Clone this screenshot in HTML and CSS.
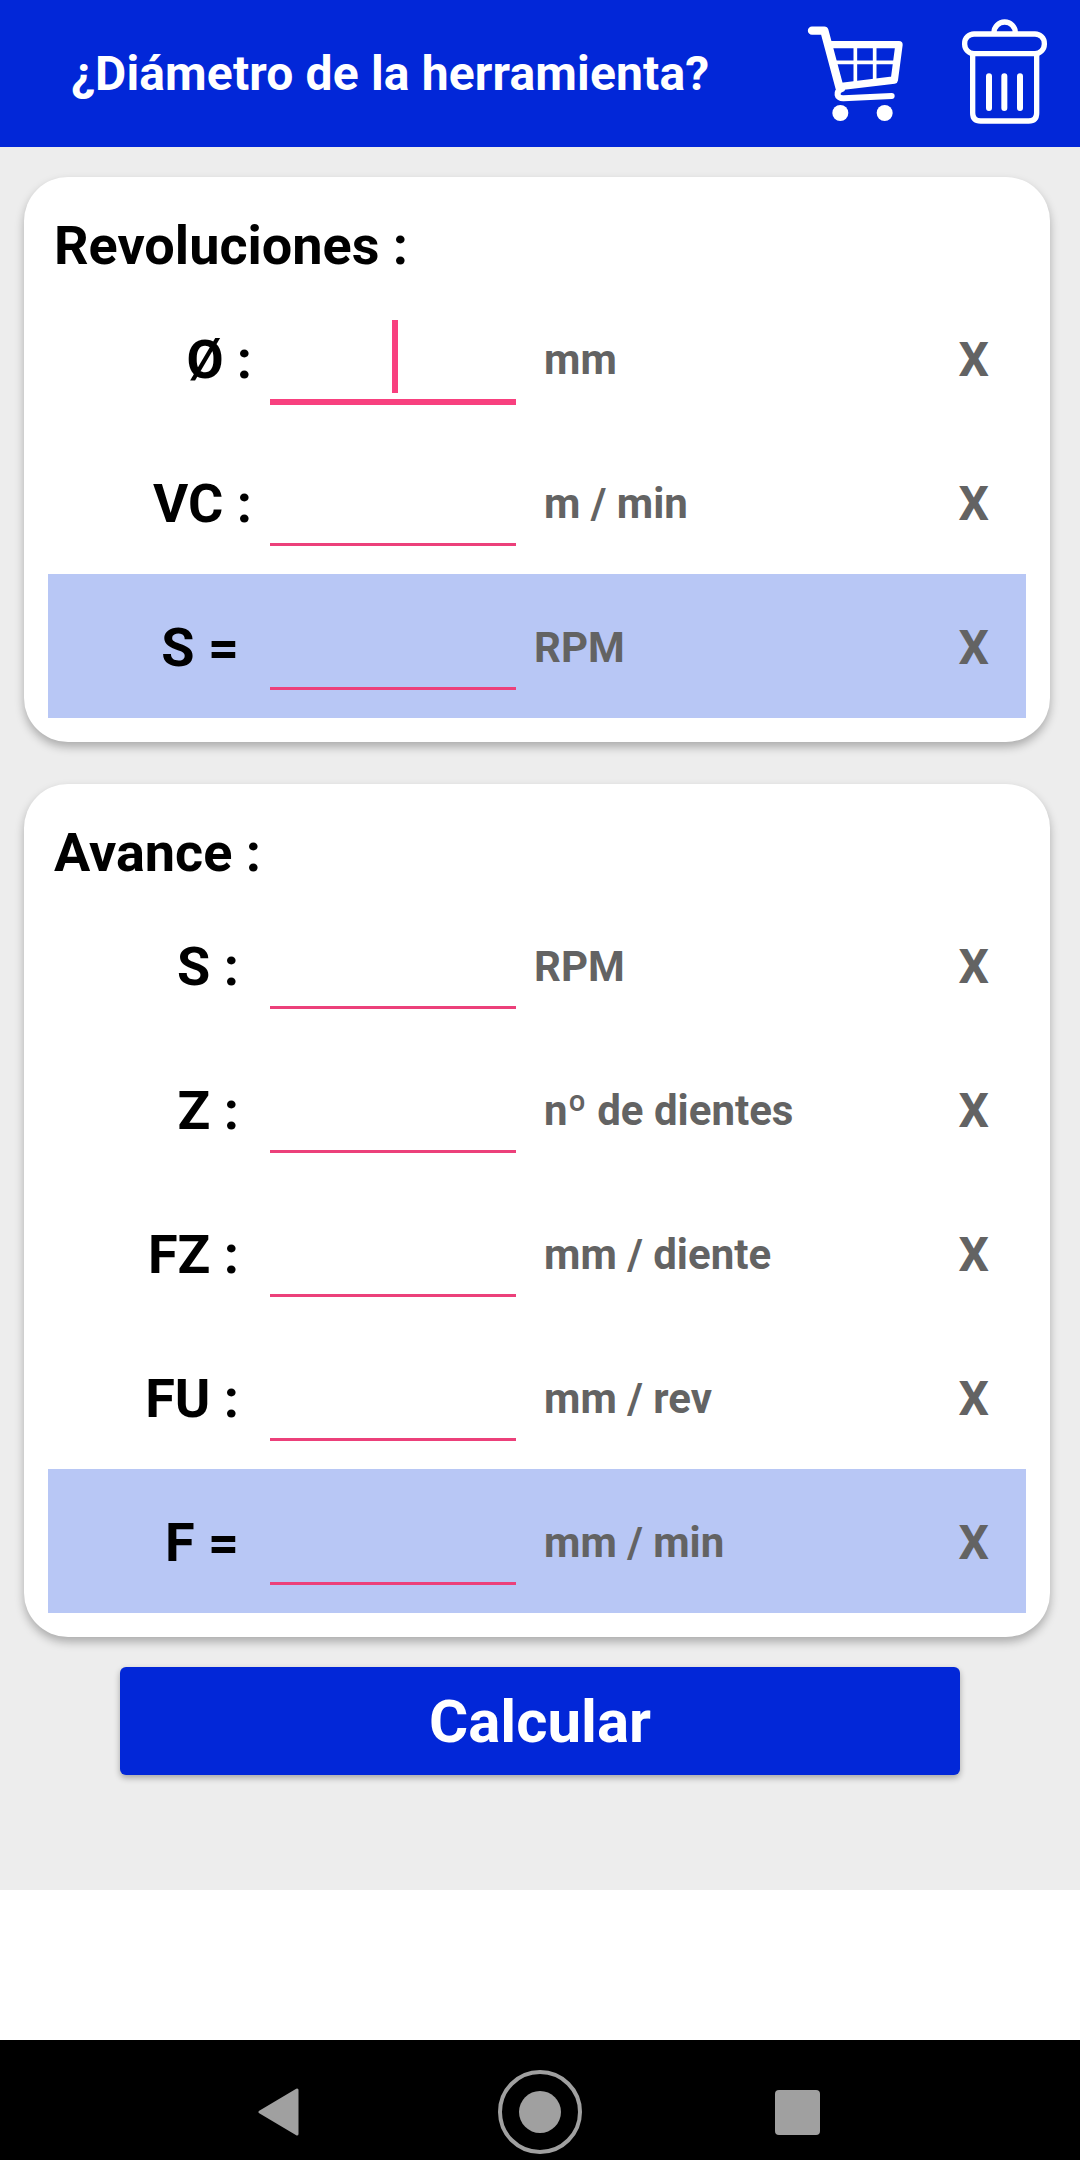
FILE: index.html
```html
<!DOCTYPE html>
<html lang="es">
<head>
<meta charset="utf-8">
<title>Calculadora</title>
<link rel="stylesheet" href="styles.css">
</head>
<body>
<div class="screen">
  <header class="appbar">
    <h1 class="appbar-title">¿Diámetro de la herramienta?</h1>
    <svg class="icon-cart" viewBox="140 70 300 300" aria-hidden="true">
      <path class="cart-post" d="M155 90H192L238 262"/>
      <path class="cart-line" d="M208 132H416L402 238L238 258"/>
      <path class="cart-grid" d="M285 135V250M343 135V245M218 185H412"/>
      <path class="cart-line cart-thin" d="M245 265C225 272 228 294 250 293L394 286"/>
      <circle class="cart-wheel" cx="240" cy="337" r="24"/>
      <circle class="cart-wheel" cx="373" cy="337" r="24"/>
    </svg>
    <svg class="icon-trash" viewBox="600 50 270 330" aria-hidden="true">
      <path class="trash-line" d="M702 97A32 32 0 0 1 766 97"/>
      <rect class="trash-line" x="614" y="101" width="239" height="59" rx="28"/>
      <path class="trash-line" d="M638 162V338Q638 362 662 362H806Q830 362 830 338V162"/>
      <path class="trash-bar" d="M687 228V323M733 228V323M780 228V323"/>
    </svg>
  </header>

  <main class="content">
    <section class="card">
      <h2 class="card-title">Revoluciones :</h2>
      <div class="row">
        <div class="label">Ø :</div>
        <div class="field field-focus"><span class="caret"></span></div>
        <div class="unit">mm</div>
        <div class="clear">X</div>
      </div>
      <div class="row">
        <div class="label">VC :</div>
        <div class="field"></div>
        <div class="unit">m / min</div>
        <div class="clear">X</div>
      </div>
      <div class="row row-result">
        <div class="label label-narrow">S =</div>
        <div class="field"></div>
        <div class="unit unit-near">RPM</div>
        <div class="clear">X</div>
      </div>
    </section>

    <section class="card">
      <h2 class="card-title">Avance :</h2>
      <div class="row">
        <div class="label label-narrow">S :</div>
        <div class="field"></div>
        <div class="unit unit-near">RPM</div>
        <div class="clear">X</div>
      </div>
      <div class="row">
        <div class="label label-narrow">Z :</div>
        <div class="field"></div>
        <div class="unit">nº de dientes</div>
        <div class="clear">X</div>
      </div>
      <div class="row">
        <div class="label label-narrow">FZ :</div>
        <div class="field"></div>
        <div class="unit">mm / diente</div>
        <div class="clear">X</div>
      </div>
      <div class="row">
        <div class="label label-narrow">FU :</div>
        <div class="field"></div>
        <div class="unit">mm / rev</div>
        <div class="clear">X</div>
      </div>
      <div class="row row-result">
        <div class="label label-narrow">F =</div>
        <div class="field"></div>
        <div class="unit">mm / min</div>
        <div class="clear">X</div>
      </div>
    </section>

    <button class="calc" type="button">Calcular</button>
  </main>

  <div class="blank"></div>

  <nav class="navbar">
    <svg class="nav-back" viewBox="0 0 42 48" aria-hidden="true">
      <path d="M39 2V46L2 24Z"/>
    </svg>
    <svg class="nav-home" viewBox="0 0 84 84" aria-hidden="true">
      <circle class="nav-ring" cx="42" cy="42" r="40"/>
      <circle class="nav-dot" cx="42" cy="42" r="21"/>
    </svg>
    <div class="nav-recent"></div>
  </nav>
</div>
</body>
</html>
```

FILE: styles.css
```css
* { box-sizing: border-box; }

html, body {
  margin: 0;
  padding: 0;
  background: #fff;
}

.screen {
  width: 1080px;
  height: 2160px;
  display: flex;
  flex-direction: column;
  font-family: Roboto, "Liberation Sans", sans-serif;
  overflow: hidden;
}

.appbar {
  height: 147px;
  flex: none;
  background: #0227d8;
  display: flex;
  align-items: center;
  padding: 0 30px 0 71px;
}

.appbar-title {
  margin: 0;
  color: #fff;
  font-size: 48px;
  font-weight: 700;
  letter-spacing: 0.15px;
  line-height: 1;
  flex: 1;
}

.icon-cart {
  width: 100px;
  height: 100px;
  flex: none;
  margin-right: 53px;
}

.icon-trash {
  width: 90px;
  height: 110px;
  flex: none;
  margin-bottom: 4px;
}

.cart-line {
  fill: none;
  stroke: #fff;
  stroke-width: 22;
  stroke-linecap: round;
  stroke-linejoin: round;
}

.cart-post {
  fill: none;
  stroke: #fff;
  stroke-width: 25;
  stroke-linecap: round;
  stroke-linejoin: round;
}

.cart-thin { stroke-width: 18; }

.cart-grid {
  fill: none;
  stroke: #fff;
  stroke-width: 11;
}

.cart-wheel { fill: #fff; }

.trash-line {
  fill: none;
  stroke: #fff;
  stroke-width: 16;
}

.trash-bar {
  fill: none;
  stroke: #fff;
  stroke-width: 18;
  stroke-linecap: round;
}

.content {
  height: 1743px;
  flex: none;
  background: #ededed;
  padding: 30px 30px 0 24px;
  display: flex;
  flex-direction: column;
  align-items: stretch;
}

.card {
  background: #fff;
  border-radius: 44px;
  padding: 0 24px 24px;
  box-shadow: 0 5px 10px rgba(0, 0, 0, 0.28);
  margin-bottom: 42px;
}

.card:last-of-type { margin-bottom: 30px; }

.card-title {
  margin: 0;
  height: 109px;
  padding: 37px 0 0 6px;
  font-size: 54px;
  font-weight: 700;
  line-height: 64px;
  color: #000;
}

.row {
  height: 144px;
  display: flex;
  align-items: center;
  padding-right: 37px;
}

.row-result { background: #b8c7f5; }

.label {
  width: 204px;
  margin-right: 18px;
  padding-top: 2px;
  text-align: right;
  font-size: 54px;
  font-weight: 700;
  color: #000;
  white-space: nowrap;
}

.label-narrow {
  width: 191px;
  margin-right: 31px;
}

.field {
  position: relative;
  width: 246px;
  height: 116px;
  align-self: flex-start;
  border-bottom: 3px solid #ec407a;
  flex: none;
}

.field-focus {
  height: 119px;
  border-bottom: 6px solid #f8407f;
}

.caret {
  position: absolute;
  left: 122px;
  top: 34px;
  width: 6px;
  height: 73px;
  background: #f8407f;
}

.unit {
  flex: 1;
  margin-left: 28px;
  padding-top: 2px;
  font-size: 42px;
  font-weight: 700;
  color: #636363;
  white-space: nowrap;
}

.unit-near { margin-left: 18px; }

.clear {
  padding-top: 2px;
  font-size: 48px;
  font-weight: 700;
  color: #636363;
}

.calc {
  align-self: center;
  width: 840px;
  height: 108px;
  margin-left: 6px;
  padding-top: 2px;
  border: none;
  border-radius: 6px;
  background: #0227d8;
  color: #fff;
  font-family: inherit;
  font-size: 60px;
  font-weight: 700;
  box-shadow: 0 3px 6px rgba(0, 0, 0, 0.3);
}

.blank {
  height: 150px;
  flex: none;
  background: #fff;
}

.navbar {
  height: 120px;
  flex: none;
  background: #000;
  display: flex;
  align-items: center;
  padding: 24px 0 0 258px;
}

.nav-back {
  width: 42px;
  height: 48px;
  flex: none;
  margin-right: 198px;
}

.nav-back path {
  fill: #a0a0a0;
  stroke: #a0a0a0;
  stroke-width: 3;
  stroke-linejoin: round;
}

.nav-home {
  width: 84px;
  height: 84px;
  flex: none;
  margin-right: 193px;
}

.nav-ring {
  fill: none;
  stroke: #a0a0a0;
  stroke-width: 4;
}

.nav-dot { fill: #a0a0a0; }

.nav-recent {
  width: 45px;
  height: 45px;
  flex: none;
  border-radius: 4px;
  background: #a0a0a0;
}
```
